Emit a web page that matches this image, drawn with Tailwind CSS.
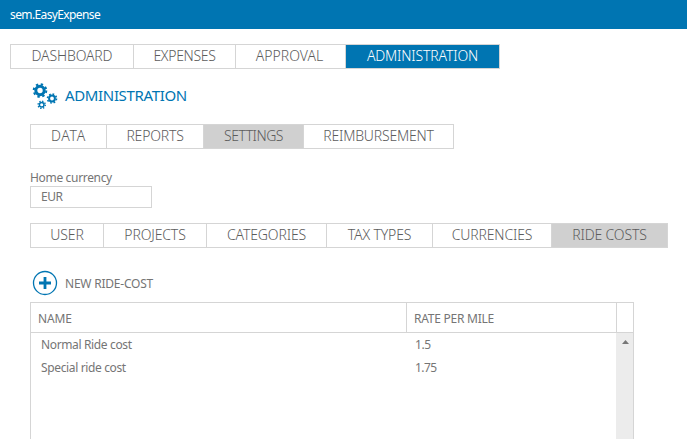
<!DOCTYPE html>
<html lang="en">
<head>
<meta charset="utf-8">
<title>sem.EasyExpense</title>
<script src="https://cdn.jsdelivr.net/npm/@tailwindcss/browser@4"></script>
</head>
<body class="h-[439px] w-[687px] overflow-hidden bg-white font-['Noto_Sans','Open_Sans',sans-serif] text-[12px] leading-4 whitespace-nowrap text-[#757575]">
<header class="flex h-[29px] items-center bg-[#0075b2] pl-[10px] text-white"><span class="tracking-[-0.62px]">sem.EasyExpense</span></header>

<nav class="mt-[15px] ml-[10px] flex h-[25px] w-[490px] border border-[#d5d5d5] text-[14px] leading-[22px] font-light tracking-[-0.15px] text-[#5c5c5c]">
  <a class="w-[123px] border-r border-[#d5d5d5] text-center">DASHBOARD</a>
  <a class="w-[102px] border-r border-[#d5d5d5] text-center tracking-[-0.3px]">EXPENSES</a>
  <a class="w-[110px] border-r border-[#d5d5d5] pr-[2px] text-center tracking-[0px]">APPROVAL</a>
  <a class="flex-1 bg-[#0075b2] text-center text-white">ADMINISTRATION</a>
</nav>

<main class="pl-[30px]">
  <div class="flex h-[55px] items-center text-[#0075b2]">
    <svg class="-mt-[2px] ml-[2px] h-[26px] w-[26px]" viewBox="0 0 26 26" fill="none" stroke="#0075b2">
      <circle cx="8" cy="7.5" r="4.2" stroke-width="3"/>
      <circle cx="8" cy="7.5" r="6.3" stroke-width="2" stroke-dasharray="2.4 2.548"/>
      <circle cx="20" cy="15.5" r="2.9" stroke-width="2"/>
      <circle cx="20" cy="15.5" r="4.5" stroke-width="1.6" stroke-dasharray="1.7 1.834"/>
      <circle cx="9.7" cy="21.8" r="2.3" stroke-width="1.5"/>
      <circle cx="9.7" cy="21.8" r="3.6" stroke-width="1.4" stroke-dasharray="1.35 1.477"/>
    </svg>
    <h1 class="-mt-[4px] ml-[7px] text-[15px] leading-5 tracking-[-0.35px]">ADMINISTRATION</h1>
  </div>

  <nav class="flex h-[25px] w-[424px] border border-[#d5d5d5] text-[14px] leading-[22px] font-light tracking-[-0.2px] text-[#5c5c5c]">
    <a class="w-[76px] border-r border-[#d5d5d5] text-center tracking-[0.7px]">DATA</a>
    <a class="w-[97px] border-r border-[#d5d5d5] text-center">REPORTS</a>
    <a class="w-[100px] border-r border-[#d5d5d5] bg-[#d0d0d0] text-center tracking-[-0.5px]">SETTINGS</a>
    <a class="flex-1 text-center">REIMBURSEMENT</a>
  </nav>

  <label class="mt-[21px] block tracking-[-0.33px]">Home currency</label>
  <div class="flex h-[22px] w-[122px] items-center border border-[#d5d5d5] pl-[10px] tracking-[-0.5px]">EUR</div>

  <nav class="mt-[15px] flex h-[25px] w-[638px] border border-[#d5d5d5] text-[14px] leading-[22px] font-light tracking-[-0.15px] text-[#5c5c5c]">
    <a class="w-[73px] border-r border-[#d5d5d5] text-center">USER</a>
    <a class="w-[103px] border-r border-[#d5d5d5] text-center">PROJECTS</a>
    <a class="w-[120px] border-r border-[#d5d5d5] text-center">CATEGORIES</a>
    <a class="w-[106px] border-r border-[#d5d5d5] text-center">TAX TYPES</a>
    <a class="w-[119px] border-r border-[#d5d5d5] text-center">CURRENCIES</a>
    <a class="flex-1 bg-[#d0d0d0] text-center">RIDE COSTS</a>
  </nav>

  <div class="mt-[22px] flex h-[26px] items-center">
    <svg class="ml-[2px] h-[26px] w-[26px]" viewBox="0 0 26 26" fill="none" stroke="#0075b2">
      <circle cx="13" cy="13" r="11.5" stroke-width="1.3"/>
      <path d="M13 7v12M7 13h12" stroke-width="2.8"/>
    </svg>
    <span class="mt-px ml-[7px] tracking-[-0.22px]">NEW RIDE-COST</span>
  </div>

  <section class="mt-[6px] flex h-[150px] w-[604px] flex-col border border-[#d5d5d5]">
    <div class="flex h-[30px] border-b border-[#d5d5d5] leading-[31px]">
      <div class="w-[376px] border-r border-[#d5d5d5] pl-[7px]"><span class="tracking-[-0.1px]">NAME</span></div>
      <div class="w-[210px] border-r border-[#d5d5d5] pl-[7px]"><span class="tracking-[-0.25px]">RATE PER MILE</span></div>
    </div>
    <div class="flex flex-1">
      <div class="w-[585px] leading-[23px]">
        <div class="flex"><span class="w-[374px] pl-[10px] tracking-[-0.36px]">Normal Ride cost</span><span class="pl-[10px] tracking-[-0.4px]">1.5</span></div>
        <div class="flex"><span class="w-[374px] pl-[10px] tracking-[-0.36px]">Special ride cost</span><span class="pl-[10px] tracking-[-0.6px]">1.75</span></div>
      </div>
      <div class="flex-1 bg-[#ececec]">
        <svg class="mt-[7px] ml-[6px] h-[4px] w-[7px]" viewBox="0 0 7 4"><path d="M0 4L3.5 0L7 4Z" fill="#777"/></svg>
      </div>
    </div>
  </section>
</main>
</body>
</html>
